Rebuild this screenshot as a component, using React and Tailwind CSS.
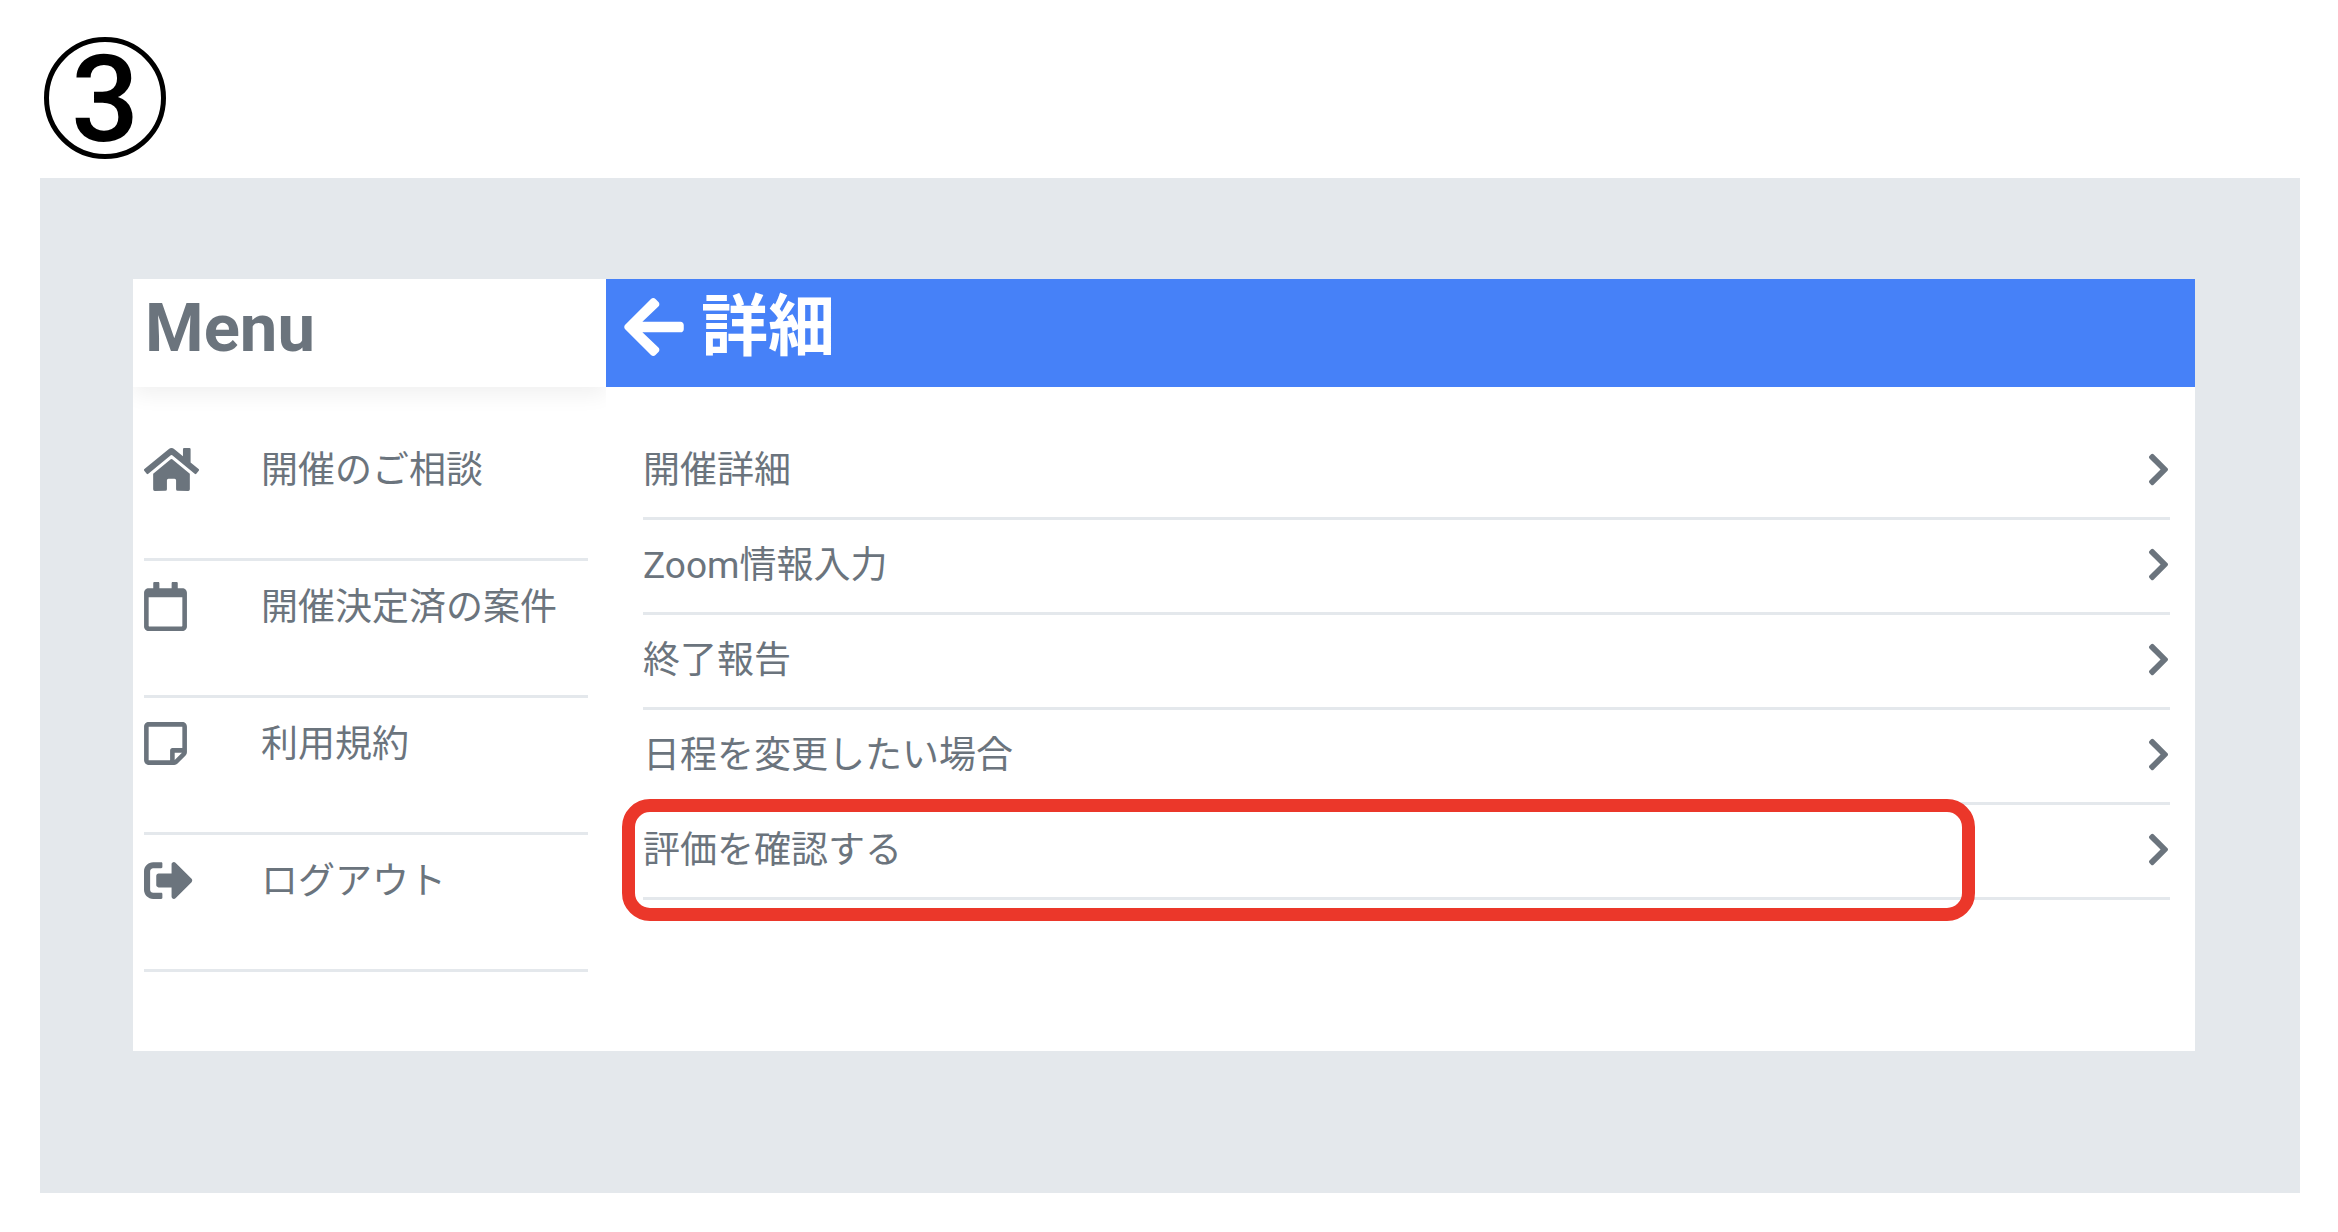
import React from "react";
import {
  FaHome,
  FaRegCalendar,
  FaRegStickyNote,
  FaSignOutAlt,
  FaArrowLeft,
  FaChevronRight,
} from "react-icons/fa";

const menuItems = [
  { label: "開催のご相談", Icon: FaHome, iconSize: "h-[49px] w-[55px]" },
  { label: "開催決定済の案件", Icon: FaRegCalendar, iconSize: "h-[49px] w-[43px]" },
  { label: "利用規約", Icon: FaRegStickyNote, iconSize: "h-[49px] w-[43px]" },
  { label: "ログアウト", Icon: FaSignOutAlt, iconSize: "h-[49px] w-[49px]" },
];

const detailItems = [
  { label: "開催詳細" },
  { label: "Zoom情報入力" },
  { label: "終了報告" },
  { label: "日程を変更したい場合" },
  { label: "評価を確認する", highlighted: true },
];

function StepNumber({ value }) {
  return (
    <div className="ml-[44px] flex size-[122px] items-center justify-center rounded-full border-5 border-black pt-1 text-[120px] leading-none font-medium text-black">
      {value}
    </div>
  );
}

function Sidebar() {
  return (
    <aside className="w-[473px] shrink-0 overflow-hidden">
      <div className="h-[108px] px-3 pt-[9px] shadow-[0_8px_20px_rgba(0,0,0,0.06)]">
        <h2 className="text-[67px] leading-[80px] font-bold">Menu</h2>
      </div>
      <nav className="pt-[37px] pr-[18px] pl-[11px]">
        <ul>
          {menuItems.map(({ label, Icon, iconSize }) => (
            <li key={label} className="h-[137px] border-b-3 border-[#e4e8ec]">
              <a href="#" className="flex h-[91px] items-center">
                <span className="w-[117px] shrink-0">
                  <Icon aria-hidden="true" className={iconSize} />
                </span>
                <span className="pt-0.5 whitespace-nowrap">{label}</span>
              </a>
            </li>
          ))}
        </ul>
      </nav>
    </aside>
  );
}

function Detail() {
  return (
    <main className="min-w-0 flex-1">
      <header className="flex h-[108px] items-start bg-[#4681f8] px-[18px] pt-2 text-white">
        <button type="button" aria-label="戻る" className="flex h-[80px] items-center">
          <FaArrowLeft className="h-[68px] w-[60px]" />
        </button>
        <h1 className="ml-[17px] text-[67px] leading-[80px] font-bold">詳細</h1>
      </header>
      <ul className="pt-[38px] pr-[25px] pl-[37px]">
        {detailItems.map(({ label, highlighted }) => (
          <li key={label} className="relative h-[95px] border-b-3 border-[#e4e8ec]">
            <a href="#" className="flex h-[89px] items-center justify-between">
              <span className="pt-0.5">{label}</span>
              <FaChevronRight aria-hidden="true" className="h-[37px] w-[23px]" />
            </a>
            {highlighted && (
              <span className="pointer-events-none absolute -top-1.5 right-[195px] -bottom-6 -left-[21px] rounded-[28px] border-[13px] border-[#eb372a]" />
            )}
          </li>
        ))}
      </ul>
    </main>
  );
}

export default function App() {
  return (
    <div className="min-h-screen bg-white pt-[37px] pb-[39px] font-[Roboto,'Noto_Sans_CJK_JP',sans-serif] text-[37px] leading-[48px] text-[#6b747d]">
      <StepNumber value={3} />
      <section className="mt-[19px] mr-[38px] ml-10 bg-[#e4e8ec] pt-[101px] pr-[105px] pb-[142px] pl-[93px]">
        <div className="flex bg-white pb-[79px]">
          <Sidebar />
          <Detail />
        </div>
      </section>
    </div>
  );
}
